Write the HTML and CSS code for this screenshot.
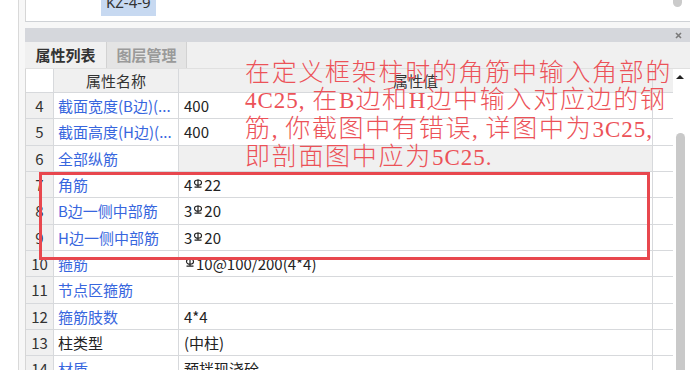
FILE: index.html
```html
<!DOCTYPE html>
<html>
<head>
    <title>属性列表</title>
    <link rel="stylesheet" href="styles.css">
</head>
<body>
    <div class="window">
        <div class="gutter"></div>
        <div class="main">
            <div class="top-panel">
                <span class="tag">KZ-4-9</span>
                <span class="top-thumb"></span>
            </div>
            <div class="spacer"></div>
            <div class="panel-title">
                <svg class="close" width="7" height="7" viewBox="0 0 7 7"><path d="M1 1L6 6M6 1L1 6" stroke="#7a7a7a" stroke-width="1.6"/></svg>
            </div>
            <div class="tabs">
                <div class="tab active">属性列表</div>
                <div class="tab">图层管理</div>
            </div>
            <div class="grid-wrap">
                <div class="grid">
                    <div class="c num head"></div><div class="c head center">属性名称</div><div class="c head center">属性值</div><div class="c head"></div>

                    <div class="c num">4</div><div class="c name">截面宽度(B边)(...</div><div class="c val">400</div><div class="c"></div>
                    <div class="c num">5</div><div class="c name">截面高度(H边)(...</div><div class="c val">400</div><div class="c"></div>
                    <div class="c num">6</div><div class="c name">全部纵筋</div><div class="c val grey"></div><div class="c"></div>
                    <div class="c num">7</div><div class="c name">角筋</div><div class="c val">4<svg class="bar" width="10" height="9" viewBox="0 0 10 9"><path d="M1.5 3.6a3.5 2.6 0 1 0 7 0a3.5 2.6 0 1 0 -7 0M5 0.3V8.2M1.5 8.2H8.5" fill="none" stroke="#222" stroke-width="1.2"/></svg>22</div><div class="c"></div>
                    <div class="c num">8</div><div class="c name">B边一侧中部筋</div><div class="c val">3<svg class="bar" width="10" height="9" viewBox="0 0 10 9"><path d="M1.5 3.6a3.5 2.6 0 1 0 7 0a3.5 2.6 0 1 0 -7 0M5 0.3V8.2M1.5 8.2H8.5" fill="none" stroke="#222" stroke-width="1.2"/></svg>20</div><div class="c"></div>
                    <div class="c num">9</div><div class="c name">H边一侧中部筋</div><div class="c val">3<svg class="bar" width="10" height="9" viewBox="0 0 10 9"><path d="M1.5 3.6a3.5 2.6 0 1 0 7 0a3.5 2.6 0 1 0 -7 0M5 0.3V8.2M1.5 8.2H8.5" fill="none" stroke="#222" stroke-width="1.2"/></svg>20</div><div class="c"></div>
                    <div class="c num">10</div><div class="c name">箍筋</div><div class="c val"><svg class="bar" width="10" height="9" viewBox="0 0 10 9"><path d="M1.5 3.6a3.5 2.6 0 1 0 7 0a3.5 2.6 0 1 0 -7 0M5 0.3V8.2M1.5 8.2H8.5" fill="none" stroke="#222" stroke-width="1.2"/></svg>10@100/200(4*4)</div><div class="c"></div>
                    <div class="c num">11</div><div class="c name">节点区箍筋</div><div class="c val"></div><div class="c"></div>
                    <div class="c num">12</div><div class="c name">箍筋肢数</div><div class="c val">4*4</div><div class="c"></div>
                    <div class="c num">13</div><div class="c name black">柱类型</div><div class="c val">(中柱)</div><div class="c"></div>
                    <div class="c num">14</div><div class="c name">材质</div><div class="c val">预拌现浇砼</div><div class="c"></div>
                </div>
                <div class="scrollbar">
                    <span class="arrow"></span>
                    <span class="thumb"></span>
                </div>
            </div>
        </div>

        <div class="note">在定义框架柱时的角筋中输入角部的<br><span class="lat">4C25, </span>在<span class="lat">B</span>边和<span class="lat">H</span>边中输入对应边的钢<br>筋<span class="lat">, </span>你截图中有错误<span class="lat">, </span>详图中为<span class="lat">3C25,</span><br>即剖面图中应为<span class="lat">5C25.</span></div>
        <div class="mark"></div>
    </div>
</body>
</html>
```

FILE: styles.css
```css
body { margin: 0; font-family: "Noto Sans CJK SC", "Noto Sans", sans-serif; font-size: 15px; color: #222; }
.window { position: relative; width: 690px; height: 370px; overflow: hidden; display: flex; background: #fff; }
.gutter { width: 6px; margin-left: 18px; border-left: 1px solid #d9d9d9; background: #f7f7f7; flex: none; }
.main { flex: 1; display: flex; flex-direction: column; min-width: 0; }

.top-panel { height: 22px; flex: none; box-sizing: border-box; border-left: 1px solid #d6d6d6; border-bottom: 1px solid #cfd2d6; display: flex; align-items: flex-start; padding-left: 75px; background: #fff; }
.tag { margin-top: -9px; height: 25px; line-height: 23px; padding: 0 5px; background: #c7d9f1; font-family: "Noto Sans", sans-serif; font-size: 15px; color: #333; }
.top-thumb { margin-left: auto; margin-right: 8px; margin-top: -5px; width: 9px; height: 12px; border-radius: 0 0 5px 5px; background: #cbcbcb; }
.spacer { height: 6px; flex: none; background: #f7f7f7; }
.panel-title { height: 14px; flex: none; background: #d5d7dc; display: flex; align-items: center; justify-content: flex-end; padding-right: 8px; }
.tabs { height: 27px; flex: none; box-sizing: border-box; background: #f0f0f0; display: flex; border-bottom: 1px solid #e0e0e0; }
.tab { width: 81px; box-sizing: border-box; text-align: center; line-height: 26px; font-weight: bold; color: #9a9a9a; background: #e4e4e4; border-left: 1px solid #d2d2d2; border-right: 1px solid #d2d2d2; }
.tab.active { color: #333; background: #f0f0f0; border: none; }

.grid-wrap { flex: 1; display: flex; border-left: 1px solid #d6d6d6; min-height: 0; }
.grid { display: grid; grid-template-columns: 28px 125px 474px 20px; grid-template-rows: 24px repeat(11, 26.33px); align-content: start; }
.c { box-sizing: border-box; border-right: 1px solid #d7d9dc; border-bottom: 1px solid #d7d9dc; white-space: nowrap; overflow: hidden; line-height: 25px; }
.c:nth-child(4n) { border-right: none; }
.head { background: #f0f0f0; color: #333; line-height: 23px; }
.num { background: #f0f0f0; text-align: center; color: #333; }
.num.head { background: #fff; }
.center { text-align: center; }
.name { padding-left: 4px; color: #3766de; }
.name.black { color: #222; }
.val { padding-left: 5px; color: #222; }
.grey { background: #f0f0f0; }
.bar { vertical-align: 3px; margin: 0 1px 0 1px; }

.scrollbar { flex: 1; display: flex; flex-direction: column; align-items: flex-start; padding-left: 3px; }
.arrow { margin-top: 6px; width: 0; height: 0; border-left: 4px solid transparent; border-right: 4px solid transparent; border-bottom: 4px solid #222; }
.thumb { margin-top: 54px; width: 9px; flex: 1; border-radius: 5px 5px 0 0; background: #c9c9c9; }

.note { position: absolute; left: 245px; top: 59px; font-family: "Liberation Serif", "Noto Sans CJK SC", serif; font-size: 25px; line-height: 27.3px; letter-spacing: 1.7px; color: #ec5258; white-space: nowrap; font-weight: 300; }
.note .lat { font-size: 23px; letter-spacing: 1px; }
.mark { position: absolute; left: 39px; top: 172px; width: 611px; height: 88px; box-sizing: border-box; border: 3px solid #e8474e; }
```
